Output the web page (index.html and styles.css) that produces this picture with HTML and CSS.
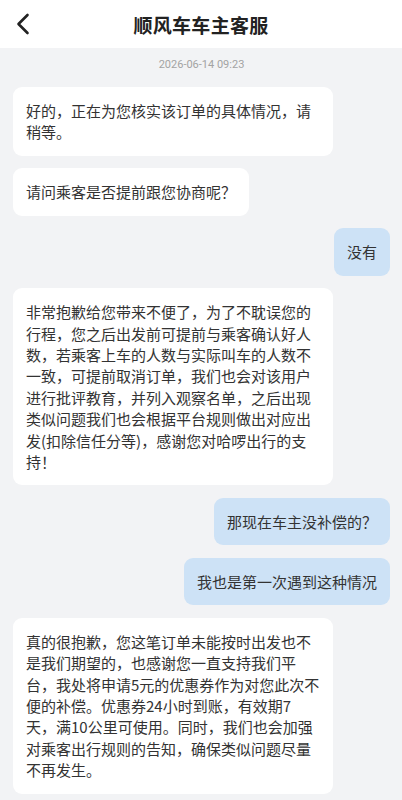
FILE: index.html
```html
<!DOCTYPE html>
<html>
<head>
  <meta charset="utf-8">
  <link rel="stylesheet" href="styles.css">
</head>
<body>
  <div class="header">
    <span class="back">
      <svg width="14" height="22" viewBox="0 0 14 22">
        <path d="M11.5 2 L2.5 11 L11.5 20" fill="none" stroke="#222" stroke-width="2.6" stroke-linecap="round" stroke-linejoin="round"/>
      </svg>
    </span>
    <h1 class="title">顺风车车主客服</h1>
  </div>

  <div class="chat">
    <div class="time">2026-06-14 09:23</div>

    <div class="msg left">好的，正在为您核实该订单的具体情况，请稍等。</div>
    <div class="msg left">请问乘客是否提前跟您协商呢？</div>
    <div class="msg right">没有</div>
    <div class="msg left">非常抱歉给您带来不便了，为了不耽误您的行程，您之后出发前可提前与乘客确认好人数，若乘客上车的人数与实际叫车的人数不一致，可提前取消订单，我们也会对该用户进行批评教育，并列入观察名单，之后出现类似问题我们也会根据平台规则做出对应出发(扣除信任分等)，感谢您对哈啰出行的支持！</div>
    <div class="msg right">那现在车主没补偿的？</div>
    <div class="msg right">我也是第一次遇到这种情况</div>
    <div class="msg left">真的很抱歉，您这笔订单未能按时出发也不是我们期望的，也感谢您一直支持我们平台，我处将申请5元的优惠券作为对您此次不便的补偿。优惠券24小时到账，有效期7天，满10公里可使用。同时，我们也会加强对乘客出行规则的告知，确保类似问题尽量不再发生。</div>
  </div>
</body>
</html>
```

FILE: styles.css
```css
body {
  margin: 0;
  background-color: #f2f3f5;
  font-family: "Noto Sans CJK SC", "Noto Sans", sans-serif;
  color: #333;
}

.header {
  height: 48px;
  background-color: #fff;
  display: flex;
  align-items: center;
  justify-content: center;
  position: relative;
}

.back {
  position: absolute;
  left: 16px;
  top: 13px;
  line-height: 0;
}

.title {
  margin: 0;
  font-size: 19px;
  font-weight: bold;
  color: #222;
  letter-spacing: 0.3px;
}

.chat {
  display: flex;
  flex-direction: column;
  gap: 12.5px;
  padding: 9px 12px 0 13px;
}

.time {
  text-align: center;
  font-family: Roboto, "Noto Sans", sans-serif;
  font-size: 11px;
  line-height: 16px;
  color: #a3a3a3;
  margin-bottom: 1.5px;
}

.msg {
  max-width: 294px;
  padding: 13px;
  font-size: 15px;
  line-height: 21.4px;
  border-radius: 9px;
  word-break: break-all;
}

.left {
  align-self: flex-start;
  background-color: #fff;
}

.right {
  align-self: flex-end;
  background-color: #cde2f6;
}
```
